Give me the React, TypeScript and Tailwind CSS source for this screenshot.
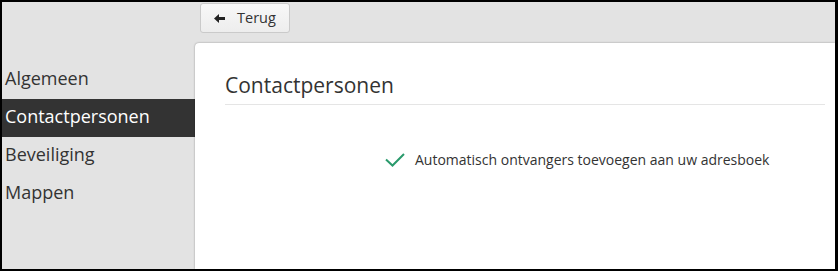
import React from 'react';

const items = ['Algemeen', 'Contactpersonen', 'Beveiliging', 'Mappen'];

const App: React.FC = () => {
  const active = 'Contactpersonen';

  return (
    <div
      className="w-[838px] h-[271px] border-t-2 border-l-2 border-b-2 border-r-[3px] border-black overflow-hidden"
      style={{ fontFamily: '"Open Sans", "Noto Sans", sans-serif' }}
    >
      <div className="flex h-full bg-[#e3e3e3] text-[#333]">
        {/* Sidebar */}
        <div className="w-[193px] shrink-0 pt-[59px]">
          {items.map(item => (
            <div
              key={item}
              className={
                item === active
                  ? 'h-[38px] pl-[3px] pt-[4px] text-[18px] leading-[26px] bg-[#333] text-white'
                  : 'h-[38px] pl-[3px] pt-[4px] text-[18px] leading-[26px]'
              }
            >
              {item}
            </div>
          ))}
        </div>

        {/* Main */}
        <div className="flex-1 flex flex-col min-w-0">
          <div className="pt-[1px] pl-[5px]">
            <button className="flex items-center gap-[12px] h-[30px] w-[90px] pl-[13px] rounded-[3px] border border-[#cacaca] bg-gradient-to-b from-[#f8f8f8] to-[#ededed] text-[14.5px] text-[#333]">
              <svg width="11" height="9" viewBox="0 0 11 9" className="shrink-0">
                <polygon points="0,4.5 5,0 5,9" fill="#222" />
                <rect x="4" y="3" width="7" height="3" fill="#222" />
              </svg>
              <span>Terug</span>
            </button>
          </div>

          <div className="mt-[10px] flex-1 bg-white rounded-tl-[4px] shadow-[0_0_2px_rgba(0,0,0,0.4)] pl-[30px] pr-[10px] pt-[28px]">
            <h2 className="text-[21px] leading-[28px] pb-[5px] border-b border-[#e5e5e5] text-[#333]">
              Contactpersonen
            </h2>

            <div className="mt-[45px] ml-[160px] flex items-center gap-[10px] text-[14px] leading-[20px] text-[#333]">
              <svg width="20" height="14" viewBox="0 0 20 14" className="shrink-0">
                <polyline
                  points="1,6.5 7.5,12.5 19,1"
                  fill="none"
                  stroke="#2a9a6c"
                  strokeWidth="2"
                />
              </svg>
              <span>Automatisch ontvangers toevoegen aan uw adresboek</span>
            </div>
          </div>
        </div>
      </div>
    </div>
  );
};

export default App;
